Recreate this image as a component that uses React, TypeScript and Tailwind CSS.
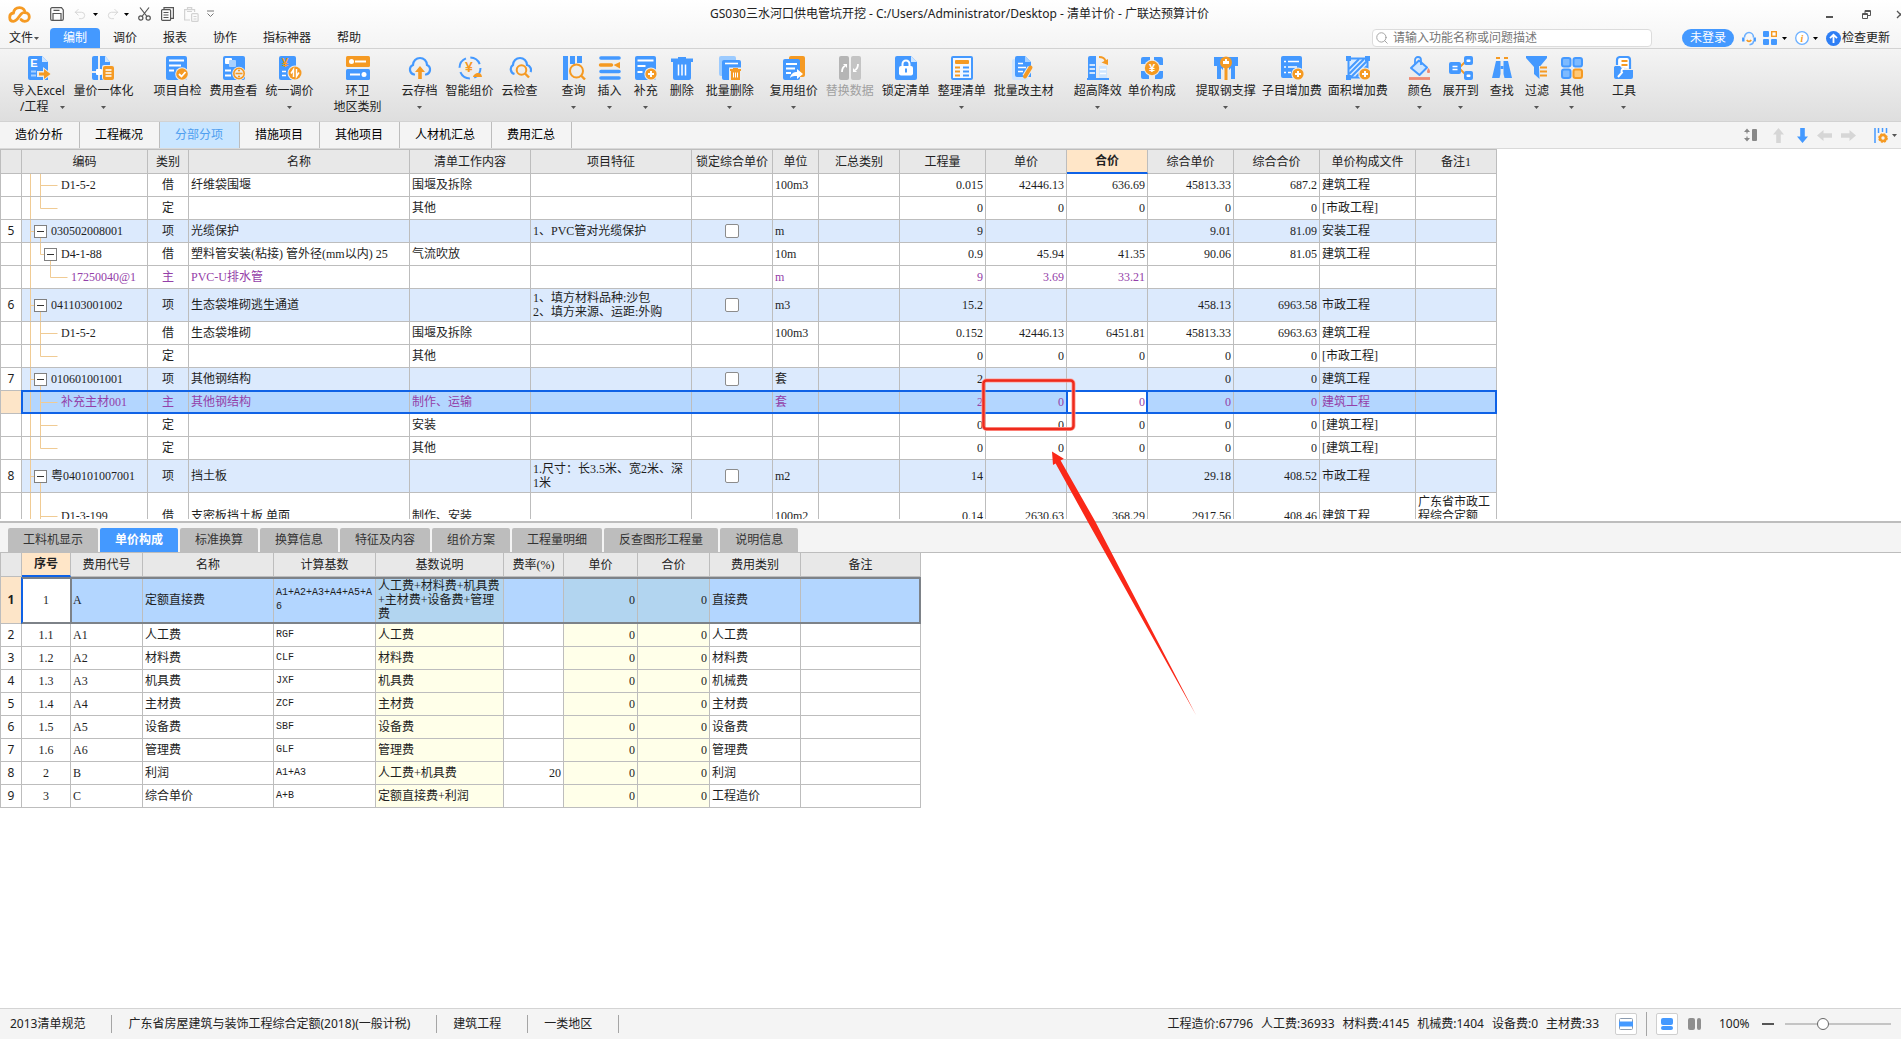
import type { ReactNode } from 'react';
import { Redo2, Search, Undo2 } from 'lucide-react';

const BLUE = '#4499ff';
const ORANGE = '#f59a23';
const TREE = '#f0cb94';

/* ---------- ribbon icons, 24x24 ---------- */

const Yen = ({ x, y, size = 12, fill = ORANGE }: { x: number; y: number; size?: number; fill?: string }) => (
  <text x={x} y={y} fontSize={size} fontWeight="700" fontFamily="Liberation Sans, sans-serif" textAnchor="middle" fill={fill}>
    ¥
  </text>
);

const PlusBadge = ({ cx = 17, cy = 18 }: { cx?: number; cy?: number }) => (
  <g>
    <circle cx={cx} cy={cy} r="6.6" fill="#ededed" />
    <circle cx={cx} cy={cy} r="5.6" fill={ORANGE} />
    <path d={`M${cx - 3} ${cy}h6M${cx} ${cy - 3}v6`} stroke="#fff" strokeWidth="2" />
  </g>
);

const icons: Record<string, ReactNode> = {
  importExcel: (
    <>
      <path d="M3 0h12l6 6v18H3a2 2 0 0 1-2-2V2a2 2 0 0 1 2-2z" fill={BLUE} />
      <path d="M15 0l6 6h-6z" fill="#cfe6ff" />
      <text x="7" y="11" fontSize="11" fontWeight="700" fontFamily="Liberation Sans, sans-serif" textAnchor="middle" fill="#fff">E</text>
      <path d="M4 15.500h5M4 19.500h5" stroke="#a8d1ff" strokeWidth="2" />
      <path d="M10 15h6v-4l9 7-9 7v-4h-6z" fill="#ededed" />
      <path d="M12 16.500h5v-3.500l6.500 5-6.500 5v-3.500h-5z" fill={ORANGE} />
    </>
  ),
  quantity: (
    <>
      <path d="M1 2a2 2 0 0 1 2-2h4v24H3a2 2 0 0 1-2-2zM9 0h5l5 6v18H9z" fill={BLUE} />
      <path d="M14 0l5 6h-5z" fill="#cfe6ff" />
      <path d="M1 16h12" stroke="#ededed" strokeWidth="2" />
      <rect x="5" y="13" width="6" height="6" rx="1" fill="#fff" />
      <rect x="11" y="9" width="13" height="15" rx="2" fill="#ededed" />
      <rect x="12" y="10" width="11" height="14" rx="2" fill={ORANGE} />
      <path d="M14.500 14h6M14.500 17h6M14.500 20h6" stroke="#fff" strokeWidth="1.500" />
    </>
  ),
  check: (
    <>
      <rect x="1" width="21" height="24" rx="2" fill={BLUE} />
      <path d="M4 4.500h15M4 9.500h12M4 14.500h5" stroke="#fff" strokeWidth="1.800" />
      <circle cx="17" cy="18" r="6.800" fill="#ededed" />
      <circle cx="17" cy="18" r="5.800" fill={ORANGE} />
      <path d="M14 18l2.500 2.500 4-4.500" stroke="#fff" strokeWidth="1.800" fill="none" />
    </>
  ),
  fee: (
    <>
      <rect x="1" width="22" height="24" rx="2" fill={BLUE} />
      <rect x="3" y="2" width="7" height="6" rx="1" fill="#fff" />
      <rect x="7" y="4" width="7" height="7" rx="1" fill="#a8d1ff" />
      <path d="M3 14.500h6M3 19.500h6" stroke="#fff" strokeWidth="1.800" />
      <circle cx="17" cy="17.500" r="6.800" fill="#ededed" />
      <circle cx="17" cy="17.500" r="5.200" fill="none" stroke={ORANGE} strokeWidth="1.600" />
      <path d="M13.500 17.500h7" stroke={ORANGE} strokeWidth="1.600" />
      <circle cx="17" cy="14.500" r="1.100" fill={ORANGE} />
      <circle cx="17" cy="20.500" r="1.100" fill={ORANGE} />
    </>
  ),
  adjust: (
    <>
      <rect x="1" width="17" height="24" rx="2" fill={BLUE} />
      <Yen x={7} y={11} />
      <path d="M4 15.500h4M4 19.500h4" stroke="#fff" strokeWidth="1.600" />
      <circle cx="17" cy="17" r="7.500" fill="#ededed" />
      <circle cx="17" cy="17" r="6.500" fill={ORANGE} />
      <path d="M13 17.500l2.500-4v7.500M21 16.500l-2.500 4V13" stroke="#fff" strokeWidth="1.500" fill="none" />
    </>
  ),
  region: (
    <>
      <rect y="0" width="24" height="11" rx="1.500" fill={ORANGE} />
      <rect y="13" width="24" height="11" rx="1.500" fill={BLUE} />
      <circle cx="5.500" cy="5.500" r="2.500" fill="#fff" />
      <path d="M9 5.500h11M4 18.500h10" stroke="#fff" strokeWidth="1.800" />
      <circle cx="18" cy="18.500" r="2.500" fill="#fff" />
    </>
  ),
  cloudUp: (
    <>
      <path d="M7 18.500H6A5 5 0 0 1 5 9a7 7 0 0 1 14 0 5 5 0 0 1-1 9.500h-1" fill="none" stroke={BLUE} strokeWidth="2.200" />
      <path d="M12 10l5 6h-3.200v7h-3.600v-7H7z" fill={ORANGE} />
    </>
  ),
  smart: (
    <>
      <circle cx="12" cy="12" r="10.500" fill="none" stroke={BLUE} strokeWidth="2" strokeDasharray="12 4.500" />
      <Yen x={11} y={16} size={14} />
      <path d="M15 21c0-3 8-7 9 0z" fill={ORANGE} />
    </>
  ),
  cloudSearch: (
    <>
      <path d="M6.500 18A5 5 0 0 1 5 9a7 7 0 0 1 14 0 5 5 0 0 1 3.500 7" fill="none" stroke={BLUE} strokeWidth="2.200" />
      <circle cx="13.500" cy="14" r="4.800" fill="none" stroke={ORANGE} strokeWidth="2" />
      <path d="M17 17.500l4 4" stroke={ORANGE} strokeWidth="2.400" />
    </>
  ),
  query: (
    <>
      <path d="M3.500 0v24M10.500 0v8M17.500 0v7" stroke={BLUE} strokeWidth="5" />
      <circle cx="14.500" cy="15" r="6.500" fill="none" stroke={ORANGE} strokeWidth="2" />
      <path d="M19 19.500l4 4" stroke={ORANGE} strokeWidth="2.400" />
    </>
  ),
  insert: (
    <>
      <path d="M3 2h18M3 15.500h18M3 22h18" stroke={BLUE} strokeWidth="3.600" strokeLinecap="round" />
      <path d="M2.500 9h11" stroke={ORANGE} strokeWidth="3.400" strokeLinecap="round" />
      <path d="M22 6v6.500L15.500 9z" fill={ORANGE} />
    </>
  ),
  supplement: (
    <>
      <rect x="1" width="21" height="24" rx="2" fill={BLUE} />
      <path d="M3.500 4.500h16M3.500 10h8M3.500 16h5" stroke="#fff" strokeWidth="1.800" />
      <PlusBadge />
    </>
  ),
  trash: (
    <>
      <path d="M1 2.500h7V1h8v1.500h7V6H1z" fill={BLUE} />
      <path d="M3 5h18v17a2 2 0 0 1-2 2H5a2 2 0 0 1-2-2z" fill={BLUE} />
      <path d="M8.500 8.500v11M12 8.500v11M15.500 8.500v11" stroke="#fff" strokeWidth="1.500" />
    </>
  ),
  batchTrash: (
    <>
      <rect x="1" width="17" height="20" rx="2" fill="#9ccbff" />
      <rect x="4" y="4" width="19" height="20" rx="2" fill={BLUE} />
      <path d="M7 7.500h13" stroke="#fff" strokeWidth="1.600" />
      <rect x="11" y="11.500" width="12.500" height="12.500" fill="#ededed" />
      <path d="M12 13h3v-1h5v1h3v2h-1v9h-9v-9h-1z" fill={ORANGE} />
      <path d="M15.500 16.500v5M17.500 16.500v5M19.500 16.500v5" stroke="#fff" strokeWidth="1" />
    </>
  ),
  reuse: (
    <>
      <rect x="7" width="16" height="21" rx="2" fill={ORANGE} />
      <rect x="1" y="3" width="17" height="21" rx="2" fill={BLUE} />
      <path d="M4 8h11M4 12.500h9M4 17h5" stroke="#fff" strokeWidth="1.800" />
      <path d="M8 22c1-5 4-6 7-6v-3l6 5-6 5v-3c-3 0-5 0-7 2z" fill="#fff" />
    </>
  ),
  replace: (
    <>
      <rect x="1" width="10" height="24" rx="2" fill="#b5b5b5" />
      <rect x="13" width="10" height="24" rx="2" fill="#c4c4c4" />
      <path d="M4 16c0-3 1-5 3-6M20 8c0 3-1 5-3 6" stroke="#fff" strokeWidth="1.800" fill="none" />
      <path d="M5 8h4v4zM19 16h-4v-4z" fill="#fff" />
    </>
  ),
  lock: (
    <>
      <path d="M3 0h14l6 6v16a2 2 0 0 1-2 2H3a2 2 0 0 1-2-2V2a2 2 0 0 1 2-2z" fill={BLUE} />
      <path d="M17 0l6 6h-6z" fill="#cfe6ff" />
      <rect x="5" y="10" width="14" height="9.500" rx="2" fill="#fff" />
      <path d="M8.500 10V8a3.500 3.500 0 0 1 7 0v2" stroke="#fff" strokeWidth="2" fill="none" />
      <path d="M12 12.500v4" stroke={BLUE} strokeWidth="2" />
    </>
  ),
  tidy: (
    <>
      <rect x="2" y="1" width="20" height="22" rx="1" fill="#f3f8ff" stroke={BLUE} strokeWidth="2" />
      <rect x="5" y="4" width="14" height="4" rx="1" fill={ORANGE} />
      <path d="M5 11.500h5M5 15.500h5M5 19.500h5" stroke={ORANGE} strokeWidth="1.800" />
      <path d="M13 11.500h6M13 15.500h6M13 19.500h6" stroke={BLUE} strokeWidth="1.800" />
    </>
  ),
  batchEdit: (
    <>
      <rect x="0" y="3" width="16" height="21" rx="2" fill="#cfe6ff" />
      <path d="M5 0h8l6 6v15H5a2 2 0 0 1-2-2V2a2 2 0 0 1 2-2z" fill={BLUE} />
      <path d="M13 0l6 6h-6z" fill="#a8d1ff" />
      <path d="M6 7.500h5M6 11.500h8M6 15.500h5" stroke="#fff" strokeWidth="1.500" />
      <path d="M13 20.500l5.500-9" stroke="#ededed" strokeWidth="6" />
      <path d="M13 20.500l5.500-9" stroke={ORANGE} strokeWidth="4" strokeLinecap="round" />
    </>
  ),
  highRise: (
    <>
      <path d="M2 2a2 2 0 0 1 2-2h6v24H2z" fill={BLUE} />
      <path d="M3.500 9h5.500M3.500 13h5.500M3.500 17h5.500" stroke="#fff" strokeWidth="1.500" />
      <rect x="13" y="10" width="8" height="12" fill="#cfe6ff" />
      <path d="M14 13.500h6M14 17.500h6" stroke="#fff" strokeWidth="1.300" />
      <path d="M1 23h22" stroke={BLUE} strokeWidth="2" />
      <path d="M13 1c4 0 6 2 6.500 4" stroke={ORANGE} strokeWidth="2" fill="none" />
      <path d="M15.500 6.500L22 3v6z" fill={ORANGE} />
    </>
  ),
  unitPrice: (
    <>
      <path d="M1 3a2 2 0 0 1 2-2h7v7H1zM14 1h7a2 2 0 0 1 2 2v6h-9zM1 15h8v8H3a2 2 0 0 1-2-2zM15 15h8v6a2 2 0 0 1-2 2h-6z" fill={BLUE} />
      <circle cx="12" cy="12" r="8.200" fill="#ededed" />
      <circle cx="12" cy="12" r="7.200" fill={ORANGE} />
      <Yen x={12} y={16} size={11} fill="#fff" />
    </>
  ),
  steel: (
    <>
      <path d="M0 1h24v9h-3v13h-4V12l-5 5-5-5v11H3V10H0z" fill={BLUE} />
      <path d="M12 8v16" stroke="#ededed" strokeWidth="6" />
      <path d="M12 8v16" stroke={ORANGE} strokeWidth="3" />
      <circle cx="12" cy="6.500" r="6" fill={ORANGE} />
      <path d="M9 5h2V3h2v2h2v3H9z" fill="#fff" />
    </>
  ),
  subItem: (
    <>
      <rect x="1" width="21" height="22" rx="2" fill={BLUE} />
      <path d="M4 5.500h2M8 5.500h11M4 11h2M8 11h9M4 16.500h2M8 16.500h3" stroke="#fff" strokeWidth="1.600" />
      <PlusBadge cx={18} />
    </>
  ),
  area: (
    <>
      <rect x="2.500" y="2.500" width="19" height="19" fill="#d9ebff" stroke={BLUE} strokeWidth="2" />
      <path d="M3 13L13 3M3 18L18 3M4 22L21 5M10 21l11-11" stroke={BLUE} strokeWidth="2" />
      <path d="M0 0h5v5H0zM19 0h5v5h-5zM0 19h5v5H0z" fill={BLUE} />
      <PlusBadge cx={19} />
    </>
  ),
  color: (
    <>
      <path d="M11 4.500l8 7-7.500 7.500-8.500-7z" fill="#cfe6ff" stroke={BLUE} strokeWidth="2" strokeLinejoin="round" />
      <path d="M7 9V4a3 3 0 0 1 6 0v5" stroke={BLUE} strokeWidth="1.800" fill="none" />
      <path d="M20.500 12c2 3 2 5 0 5s-2-2 0-5z" fill="#ee8a72" />
      <path d="M1 22.500h21" stroke="#ee8a72" strokeWidth="2.800" />
    </>
  ),
  expand: (
    <>
      <path d="M11 11l6-6M11 13l6 6" stroke={ORANGE} strokeWidth="1.800" />
      <rect x="0" y="6" width="12" height="12" rx="2" fill={BLUE} />
      <path d="M3.500 10.500h5M3.500 13.500h5" stroke="#fff" strokeWidth="1.400" />
      <rect x="15" y="0" width="9" height="9" rx="2" fill={BLUE} />
      <rect x="15" y="15" width="9" height="9" rx="2" fill={BLUE} />
      <rect x="17.500" y="3.500" width="4" height="2.500" rx="1" fill="#fff" />
      <rect x="17.500" y="18.500" width="4" height="2.500" rx="1" fill="#fff" />
    </>
  ),
  find: (
    <>
      <path d="M6 5h4.500v13L9.500 22H2zM13.500 5H18l4 17h-7.500l-1-4z" fill={BLUE} />
      <path d="M6 2h4M14 2h4" stroke={ORANGE} strokeWidth="2" />
      <path d="M10.500 10h3v3h-3z" fill={BLUE} />
    </>
  ),
  filter: (
    <>
      <path d="M1 0h21v2l-7.500 9v12L9 18v-7L1 2z" fill={BLUE} />
      <path d="M14 10h9v14h-8z" fill="#ededed" />
      <path d="M15 11.500h7M15 15.500h7M15 19.500h7" stroke={ORANGE} strokeWidth="2" />
    </>
  ),
  other: (
    <>
      <g fill="#7dbaff" stroke={BLUE} strokeWidth="2">
        <rect x="2" y="2" width="8.500" height="8.500" rx="2" />
        <rect x="13.500" y="2" width="8.500" height="8.500" rx="2" />
        <rect x="2" y="13.500" width="8.500" height="8.500" rx="2" />
      </g>
      <rect x="13.500" y="13.500" width="8.500" height="8.500" rx="2" fill="#ffc877" stroke={ORANGE} strokeWidth="2" />
    </>
  ),
  tools: (
    <>
      <path d="M5 9V4a3 3 0 0 1 3-3h7a3 3 0 0 1 3 3v9" fill="#fff" stroke={BLUE} strokeWidth="2.200" />
      <path d="M9.500 5h6M9.500 9h6" stroke={ORANGE} strokeWidth="1.800" />
      <path d="M3 10h5l3 4h10v7a2 2 0 0 1-2 2H4a2 2 0 0 1-2-2V11z" fill={BLUE} />
      <path d="M6 21l4-4.500a2.500 2.500 0 0 1 2-4" stroke="#fff" strokeWidth="2" fill="none" />
    </>
  ),
};

interface Tool {
  icon: string;
  label: string;
  second?: string;
  menu?: boolean;
  disabled?: boolean;
}

const toolGroups: { className: string; tools: Tool[] }[] = [
  {
    className: 'gap-2',
    tools: [
      { icon: 'importExcel', label: '导入Excel', second: '/工程', menu: true },
      { icon: 'quantity', label: '量价一体化', menu: true },
    ],
  },
  {
    className: 'ml-5 gap-2',
    tools: [
      { icon: 'check', label: '项目自检' },
      { icon: 'fee', label: '费用查看' },
      { icon: 'adjust', label: '统一调价', menu: true },
    ],
  },
  { className: 'ml-5', tools: [{ icon: 'region', label: '环卫', second: '地区类别' }] },
  {
    className: 'ml-5 gap-2',
    tools: [
      { icon: 'cloudUp', label: '云存档', menu: true },
      { icon: 'smart', label: '智能组价' },
      { icon: 'cloudSearch', label: '云检查' },
    ],
  },
  {
    className: 'ml-6 gap-3',
    tools: [
      { icon: 'query', label: '查询', menu: true },
      { icon: 'insert', label: '插入', menu: true },
      { icon: 'supplement', label: '补充', menu: true },
      { icon: 'trash', label: '删除' },
      { icon: 'batchTrash', label: '批量删除', menu: true },
    ],
  },
  {
    className: 'ml-4 gap-2',
    tools: [
      { icon: 'reuse', label: '复用组价', menu: true },
      { icon: 'replace', label: '替换数据', disabled: true },
      { icon: 'lock', label: '锁定清单' },
      { icon: 'tidy', label: '整理清单', menu: true },
      { icon: 'batchEdit', label: '批量改主材' },
    ],
  },
  {
    className: 'ml-5 gap-1.5',
    tools: [
      { icon: 'highRise', label: '超高降效', menu: true },
      { icon: 'unitPrice', label: '单价构成' },
    ],
  },
  {
    className: 'ml-5 gap-1.5',
    tools: [
      { icon: 'steel', label: '提取钢支撑', menu: true },
      { icon: 'subItem', label: '子目增加费' },
      { icon: 'area', label: '面积增加费', menu: true },
    ],
  },
  {
    className: 'ml-5 gap-[11px]',
    tools: [
      { icon: 'color', label: '颜色', menu: true },
      { icon: 'expand', label: '展开到', menu: true },
      { icon: 'find', label: '查找' },
      { icon: 'filter', label: '过滤', menu: true },
      { icon: 'other', label: '其他', menu: true },
    ],
  },
  { className: 'ml-7', tools: [{ icon: 'tools', label: '工具', menu: true }] },
];

const Caret = ({ className = 'text-[#555]' }: { className?: string }) => (
  <svg width="5" height="3" viewBox="0 0 5 3" className={`shrink-0 ${className}`} aria-hidden="true">
    <path d="M0 0h5L2.500 3z" fill="currentColor" />
  </svg>
);

/* ---------- title bar, menu, ribbon ---------- */

const TitleBar = () => (
  <header className="grid h-7 grid-cols-[1fr_auto_1fr] items-center">
    <div className="flex items-center pl-2 text-[#555]">
      <svg width="23" height="17" viewBox="0 0 23 17" aria-hidden="true">
        <path
          d="M5.500 7C6 3.300 8.800 1.700 11.500 1.700c3.300 0 5.300 2.200 5.500 4.900 2.500.2 4.300 2 4.300 4.400 0 2.800-2.300 4.300-4.500 4.300-1.800 0-2.900-.7-3.800-1.800M14.500 7C11.500 8 10 15.300 5.500 15.300c-2.500 0-3.800-1.800-3.800-4.100C1.700 8.800 3.500 7.200 5.500 7"
          fill="none"
          stroke={ORANGE}
          strokeWidth="2.800"
          strokeLinecap="round"
        />
      </svg>
      <button aria-label="保存" className="ml-[19px]">
        <svg width="14" height="14" viewBox="0 0 14 14" fill="none" stroke="currentColor" strokeWidth="1.200" aria-hidden="true">
          <path d="M2 .700h9.500L13.300 3v9a1.300 1.300 0 0 1-1.300 1.300H2A1.300 1.300 0 0 1 .700 12V2A1.300 1.300 0 0 1 2 .700zM3 13V6.500h8V13M3.500 3.300h6" />
        </svg>
      </button>
      <button aria-label="撤销" className="ml-[9px] text-[#d2d2d2]"><Undo2 size={14} strokeWidth={1.5} /></button>
      <button aria-label="撤销列表" className="ml-1.5"><Caret className="text-black" /></button>
      <button aria-label="重做" className="ml-2 text-[#d2d2d2]"><Redo2 size={14} strokeWidth={1.5} /></button>
      <button aria-label="重做列表" className="ml-1"><Caret className="text-black" /></button>
      <button aria-label="剪切" className="ml-[9px]">
        <svg width="13" height="14" viewBox="0 0 13 14" fill="none" stroke="currentColor" strokeWidth="1.200" aria-hidden="true">
          <path d="M2 .500l7 9M11 .500l-7 9" />
          <circle cx="2.800" cy="11" r="2.100" />
          <circle cx="10.200" cy="11" r="2.100" />
        </svg>
      </button>
      <button aria-label="复制" className="ml-2.5">
        <svg width="13" height="14" viewBox="0 0 13 14" fill="none" stroke="currentColor" strokeWidth="1.200" aria-hidden="true">
          <rect x=".600" y="2.600" width="9" height="10.800" rx="1" />
          <path d="M3 2.500V.600h9.400v10.800H10M2.500 5.500h5M2.500 8h5M2.500 10.500h5" />
        </svg>
      </button>
      <button aria-label="粘贴" className="ml-2.5 text-[#d2d2d2]">
        <svg width="15" height="15" viewBox="0 0 15 15" fill="none" stroke="currentColor" strokeWidth="1.200" aria-hidden="true">
          <path d="M6 13H.600V2.600h10V5M3.500 2.500V.600h4.200v1.900M3 4.500h5" />
          <rect x="7.600" y="6.600" width="6.500" height="7.800" rx="1" />
          <path d="M9.500 9.500h3M9.500 12h3" />
        </svg>
      </button>
      <button aria-label="自定义" className="ml-2">
        <svg width="7" height="8" viewBox="0 0 7 8" aria-hidden="true">
          <path d="M0 1h7M.500 3.500l3 3 3-3" stroke="#777" fill="none" />
        </svg>
      </button>
    </div>
    <h1 className="pl-[18px] whitespace-nowrap">
      GS030三水河口供电管坑开挖 - C:/Users/Administrator/Desktop - 清单计价 - 广联达预算计价
    </h1>
    <div className="flex items-center justify-end gap-[29px] overflow-hidden text-[#555]">
      <button aria-label="最小化">
        <svg width="7" height="9" viewBox="0 0 7 9" aria-hidden="true"><path d="M0 7h7" stroke="currentColor" strokeWidth="2" /></svg>
      </button>
      <button aria-label="还原">
        <svg width="9" height="9" viewBox="0 0 9 9" fill="none" stroke="currentColor" aria-hidden="true">
          <path d="M.500 3.500h5v5h-5zM3 3V.500h5.500v5H6M.500 4.500h5M3 1.500h5" />
        </svg>
      </button>
      <button aria-label="关闭" className="-mr-1 -ml-1">
        <svg width="9" height="9" viewBox="0 0 9 9" aria-hidden="true"><path d="M1 1l7 7M8 1l-7 7" stroke="currentColor" strokeWidth="1.300" /></svg>
      </button>
    </div>
  </header>
);

const menus = ['调价', '报表', '协作', '指标神器', '帮助'];

const MenuBar = () => (
  <div className="flex h-5 items-center">
    <nav className="flex h-full items-center">
      <button className="flex items-center gap-px pr-[11px] pl-[9px]">
        文件
        <Caret />
      </button>
      <button className="h-full rounded-t-sm bg-[#4499ff] px-[13px] text-white">编制</button>
      {menus.map((m) => (
        <button key={m} className="px-[13px]">{m}</button>
      ))}
    </nav>
    <div className="ml-auto flex items-center">
      <label className="flex h-[18px] w-[280px] items-center rounded-sm border border-[#dcdcdc] bg-white pl-0.5">
        <Search size={14} strokeWidth={1.5} className="text-[#999]" />
        <input
          type="text"
          aria-label="搜索"
          placeholder="请输入功能名称或问题描述"
          className="ml-1 min-w-0 flex-1 bg-transparent outline-none placeholder:text-[#777]"
        />
      </label>
      <button className="ml-[30px] h-[18px] w-[52px] rounded-full bg-[#4499ff] text-white">未登录</button>
      <button aria-label="客服" className="ml-2">
        <svg width="14" height="15" viewBox="0 0 14 15" fill="none" strokeWidth="1.600" aria-hidden="true">
          <path d="M2.500 6.500a4.500 5 0 0 1 9 0M11.500 10c0 2-1.500 3.500-4 3.700" stroke="#6cb0ff" />
          <path d="M1.300 6.500v4M12.700 6.500v4" stroke={BLUE} strokeWidth="2.400" />
          <path d="M4.800 9c1 1.800 3.400 1.800 4.400 0" stroke={ORANGE} />
        </svg>
      </button>
      <button aria-label="应用" className="ml-[7px] flex items-center gap-[5px]">
        <svg width="14" height="14" viewBox="0 0 14 14" aria-hidden="true">
          <rect x="0" y="0" width="6" height="6" rx="1" fill={BLUE} />
          <rect x="0" y="8" width="6" height="6" rx="1" fill={BLUE} />
          <rect x="8" y="8" width="6" height="6" rx="1" fill={BLUE} />
          <rect x="8.700" y=".700" width="4.600" height="4.600" fill="#fff" stroke={ORANGE} strokeWidth="1.400" />
        </svg>
        <Caret className="text-black" />
      </button>
      <button aria-label="关于" className="ml-2 flex items-center gap-1">
        <svg width="14" height="14" viewBox="0 0 14 14" aria-hidden="true">
          <circle cx="7" cy="7" r="6.300" fill="#fff" stroke="#6cb0ff" strokeWidth="1.300" />
          <text x="7" y="10.500" fontSize="10" fontWeight="700" fontStyle="italic" fontFamily="Liberation Serif, serif" textAnchor="middle" fill={ORANGE}>i</text>
        </svg>
        <Caret className="text-black" />
      </button>
      <button className="mr-[11px] ml-2 flex items-center gap-px">
        <svg width="15" height="15" viewBox="0 0 15 15" aria-hidden="true">
          <circle cx="7.500" cy="7.500" r="7.500" fill="#2f7ff5" />
          <path d="M7.500 12V4M4 7.200l3.500-3.500L11 7.200" stroke="#fff" strokeWidth="1.800" fill="none" />
        </svg>
        检查更新
      </button>
    </div>
  </div>
);

const Ribbon = () => (
  <div className="flex h-[74px] items-start overflow-hidden border-y border-[#d2d2d2] bg-linear-to-b from-[#f4f4f4] to-[#dedede] pt-[7px] pl-3">
    {toolGroups.map((group) => (
      <div key={group.tools[0].label} className={`flex shrink-0 items-start ${group.className}`}>
        {group.tools.map((t) => (
          <button
            key={t.label}
            disabled={t.disabled}
            className={`flex flex-col items-center leading-4 whitespace-nowrap ${t.disabled ? 'text-[#a0a0a0]' : ''}`}
          >
            <svg width="24" height="24" viewBox="0 0 24 24" className="mb-[3px]" aria-hidden="true">{icons[t.icon]}</svg>
            <span>{t.label}</span>
            <span className="flex h-4 items-center gap-3">
              {t.second && <span className={t.menu ? 'ml-2' : ''}>{t.second}</span>}
              {t.menu && <Caret />}
            </span>
          </button>
        ))}
      </div>
    ))}
  </div>
);

const pageTabs = ['造价分析', '工程概况', '分部分项', '措施项目', '其他项目', '人材机汇总', '费用汇总'];

const Arrow = ({ rotate, color }: { rotate: string; color: string }) => (
  <svg width="15" height="15" viewBox="0 0 15 15" className={rotate} aria-hidden="true">
    <path d="M7.500 0l5.500 6.500h-3.200V15H5.200V6.500H2z" fill={color} />
  </svg>
);

const PageTabs = () => (
  <div className="flex h-[27px] items-stretch border-b border-[#d9d9d9] bg-[#f4f4f4]">
    {pageTabs.map((t) => (
      <button
        key={t}
        className={`border-r border-[#bdbdbd] pr-4 pl-[15px] ${
          t === '分部分项' ? 'bg-[#cae6ff] text-[#4f9ff0]' : 'text-black'
        }`}
      >
        {t}
      </button>
    ))}
    <div className="ml-auto flex items-center pr-1">
      <button aria-label="行高">
        <svg width="13" height="14" viewBox="0 0 13 14" aria-hidden="true">
          <path d="M3 2v3.500M3 8.500V12" stroke="#888" strokeWidth="1.200" />
          <path d="M0 4l3-3.500L6 4zM0 10l3 3.500L6 10z" fill="#888" />
          <rect x="8" y="1" width="5" height="12" rx="1" fill="#888" />
        </svg>
      </button>
      <button aria-label="上移" className="ml-3.5"><Arrow rotate="rotate-0" color="#d6d6d6" /></button>
      <button aria-label="下移" className="ml-[9px]"><Arrow rotate="rotate-180" color={BLUE} /></button>
      <button aria-label="左移" className="ml-[7px]"><Arrow rotate="-rotate-90" color="#d6d6d6" /></button>
      <button aria-label="右移" className="ml-[9px]"><Arrow rotate="rotate-90" color="#d6d6d6" /></button>
      <button aria-label="列设置" className="ml-[18px] flex items-center gap-1">
        <svg width="14" height="15" viewBox="0 0 14 15" aria-hidden="true">
          <path d="M1 0v15M4.500 0v5M8.500 0v4M12.500 0v5" stroke={BLUE} strokeWidth="1.500" />
          <circle cx="9" cy="10" r="3" fill="none" stroke={ORANGE} strokeWidth="2.600" />
          <circle cx="9" cy="10" r="4.200" fill="none" stroke={ORANGE} strokeWidth="1.200" strokeDasharray="2 1.300" />
        </svg>
        <Caret />
      </button>
    </div>
  </div>
);

/* ---------- bill of quantities ---------- */

interface BillRow {
  no?: string;
  code?: string;
  depth: 1 | 2 | 3;
  box?: boolean;
  last?: boolean;
  kind: string;
  name?: string;
  work?: string;
  feature?: string;
  unit?: string;
  nums: string[]; // 工程量 单价 合价 综合单价 综合合价
  file?: string;
  note?: string;
  height?: number;
  selected?: boolean;
}

const billColumns: [string, string][] = [
  ['编码', 'w-[126px]'],
  ['类别', 'w-[41px]'],
  ['名称', 'w-[221px]'],
  ['清单工作内容', 'w-[121px]'],
  ['项目特征', 'w-[161px]'],
  ['锁定综合单价', 'w-[81px]'],
  ['单位', 'w-[46px]'],
  ['汇总类别', 'w-[81px]'],
  ['工程量', 'w-[86px]'],
  ['单价', 'w-[81px]'],
  ['合价', 'w-[81px]'],
  ['综合单价', 'w-[86px]'],
  ['综合合价', 'w-[86px]'],
  ['单价构成文件', 'w-[96px]'],
  ['备注1', 'w-[81px]'],
];

const billRows: BillRow[] = [
  { depth: 2, code: 'D1-5-2', kind: '借', name: '纤维袋围堰', work: '围堰及拆除', unit: '100m3', nums: ['0.015', '42446.13', '636.69', '45813.33', '687.2'], file: '建筑工程' },
  { depth: 2, last: true, kind: '定', work: '其他', nums: ['0', '0', '0', '0', '0'], file: '[市政工程]' },
  { no: '5', depth: 1, box: true, code: '030502008001', kind: '项', name: '光缆保护', feature: '1、PVC管对光缆保护', unit: 'm', nums: ['9', '', '', '9.01', '81.09'], file: '安装工程' },
  { depth: 2, box: true, last: true, code: 'D4-1-88', kind: '借', name: '塑料管安装(粘接) 管外径(mm以内) 25', work: '气流吹放', unit: '10m', nums: ['0.9', '45.94', '41.35', '90.06', '81.05'], file: '建筑工程' },
  { depth: 3, last: true, code: '17250040@1', kind: '主', name: 'PVC-U排水管', unit: 'm', nums: ['9', '3.69', '33.21', '', ''] },
  { no: '6', depth: 1, box: true, code: '041103001002', kind: '项', name: '生态袋堆砌逃生通道', feature: '1、填方材料品种:沙包\n2、填方来源、运距:外购', unit: 'm3', nums: ['15.2', '', '', '458.13', '6963.58'], file: '市政工程', height: 33 },
  { depth: 2, code: 'D1-5-2', kind: '借', name: '生态袋堆砌', work: '围堰及拆除', unit: '100m3', nums: ['0.152', '42446.13', '6451.81', '45813.33', '6963.63'], file: '建筑工程' },
  { depth: 2, last: true, kind: '定', work: '其他', nums: ['0', '0', '0', '0', '0'], file: '[市政工程]' },
  { no: '7', depth: 1, box: true, code: '010601001001', kind: '项', name: '其他钢结构', unit: '套', nums: ['2', '', '', '0', '0'], file: '建筑工程' },
  { depth: 2, selected: true, code: '补充主材001', kind: '主', name: '其他钢结构', work: '制作、运输', unit: '套', nums: ['2', '0', '0', '0', '0'], file: '建筑工程' },
  { depth: 2, kind: '定', work: '安装', nums: ['0', '0', '0', '0', '0'], file: '[建筑工程]' },
  { depth: 2, last: true, kind: '定', work: '其他', nums: ['0', '0', '0', '0', '0'], file: '[建筑工程]' },
  { no: '8', depth: 1, box: true, code: '粤040101007001', kind: '项', name: '挡土板', feature: '1.尺寸：长3.5米、宽2米、深\n1米', unit: 'm2', nums: ['14', '', '', '29.18', '408.52'], file: '市政工程', height: 33 },
  { depth: 2, code: 'D1-3-199', kind: '借', name: '支密板挡土板 单面', work: '制作、安装', unit: '100m2', nums: ['0.14', '2630.63', '368.29', '2917.56', '408.46'], file: '建筑工程', note: '广东省市政工\n程综合定额\n\u00a0', height: 47 },
];

const TreeCell = ({ row }: { row: BillRow }) => {
  const h = (row.height ?? 23) - 1;
  const mid = Math.floor(h / 2) + 0.5;
  // each level's guide sits 10px right of its parent's
  const x = row.depth * 10 - 1.5;
  const end = row.box ? x + 4 : x + 17;
  const guides = [`M8.5 0V${h}`, `M${x} ${mid}H${end}`];
  if (row.depth > 1) guides.push(`M${x} 0V${row.last ? mid : h}`);
  if (row.box) guides.push(`M${x + 10} ${mid}V${h}`);

  return (
    <div className="flex items-center">
      <svg width={end - 0.5} height={h} className="shrink-0 overflow-visible" aria-hidden="true">
        <path d={guides.join('')} stroke={TREE} fill="none" />
      </svg>
      {row.box && (
        <button aria-label="折叠" className="relative flex size-[13px] shrink-0 items-center justify-center border border-[#808080] bg-white">
          <span className="h-px w-[7px] bg-[#333]" />
        </button>
      )}
      <span className="pl-1 whitespace-nowrap">{row.code}</span>
    </div>
  );
};

const cell = 'border-r border-b border-[#bdbdbd] p-0';
const grid = "table-fixed border-separate border-spacing-0 border-l border-[#bdbdbd] font-['Liberation_Serif','Noto_Sans_CJK_SC',serif] text-xs leading-[14px]";

const BillTable = () => (
  <table className={`w-[1497px] border-t ${grid}`}>
    <colgroup>
      <col className="w-[21px]" />
      {billColumns.map(([label, w]) => (
        <col key={label} className={w} />
      ))}
    </colgroup>
    <thead>
      <tr className="h-6 bg-[#e8e8e8]">
        <th className={cell} />
        {billColumns.map(([label]) => (
          <th
            key={label}
            className={
              label === '合价'
                ? 'border-r border-b-2 border-r-[#bdbdbd] border-b-[#0f62e6] bg-[#ffe6c8] p-0 font-bold'
                : `${cell} font-normal whitespace-nowrap`
            }
          >
            {label}
          </th>
        ))}
      </tr>
    </thead>
    <tbody>
      {billRows.map((row, i) => {
        const item = row.kind === '项';
        const bg = row.selected ? 'bg-[#b3d6ff]' : item ? 'bg-[#dceafd]' : 'bg-white';
        const height = row.height === 47 ? 'h-[47px]' : row.height === 33 ? 'h-[33px]' : 'h-[23px]';
        return (
          <tr key={i} className={`relative ${height} ${bg} ${row.kind === '主' ? 'text-[#9440a8]' : 'text-[#1e1e1e]'}`}>
            <td className={`${cell} text-center font-['Noto_Sans',sans-serif] ${row.selected ? 'bg-[#fde5c8]' : 'bg-white'}`}>{row.no}</td>
            <td className={cell}><TreeCell row={row} /></td>
            <td className={`${cell} text-center`}>{row.kind}</td>
            <td className={`${cell} px-0.5 whitespace-nowrap`}>{row.name}</td>
            <td className={`${cell} px-0.5`}>{row.work}</td>
            <td className={`${cell} px-0.5 whitespace-pre`}>{row.feature}</td>
            <td className={cell}>
              {item && (
                <input
                  type="checkbox"
                  aria-label="锁定综合单价"
                  className="mx-auto block size-3.5 appearance-none rounded-xs border border-[#8c8c8c] bg-white"
                />
              )}
            </td>
            <td className={`${cell} px-0.5`}>{row.unit}</td>
            <td className={cell} />
            {row.nums.map((n, j) => (
              <td key={j} className={`${cell} px-0.5 text-right ${row.selected && j === 2 ? 'bg-white' : ''}`}>{n}</td>
            ))}
            <td className={`${cell} px-0.5`}>{row.file}</td>
            <td className={`${cell} px-0.5 whitespace-pre`}>
              {row.note}
              {row.selected && (
                <>
                  <span className="pointer-events-none absolute -top-px right-0 bottom-0 left-5 border-2 border-[#0f62e6]" />
                  <span className="pointer-events-none absolute top-0 right-[349px] bottom-0 w-[82px] border-x-2 border-[#0f62e6]" />
                </>
              )}
            </td>
          </tr>
        );
      })}
    </tbody>
  </table>
);

/* ---------- unit price breakdown ---------- */

const detailTabs = ['工料机显示', '单价构成', '标准换算', '换算信息', '特征及内容', '组价方案', '工程量明细', '反查图形工程量', '说明信息'];

const DetailTabs = () => (
  <div className="flex items-end gap-0.5 border-b border-[#bdbdbd] bg-[#f4f4f4] pt-[5px] pl-2">
    {detailTabs.map((t) => (
      <button
        key={t}
        className={`h-6 rounded-t-xs px-[15px] whitespace-nowrap ${
          t === '单价构成' ? 'bg-[#4499ff] font-bold text-white' : 'bg-[#bdbdbd] text-[#333]'
        }`}
      >
        {t}
      </button>
    ))}
  </div>
);

const priceColumns: [string, string][] = [
  ['序号', 'w-[49px]'],
  ['费用代号', 'w-[72px]'],
  ['名称', 'w-[131px]'],
  ['计算基数', 'w-[102px]'],
  ['基数说明', 'w-[128px]'],
  ['费率(%)', 'w-[60px]'],
  ['单价', 'w-[74px]'],
  ['合价', 'w-[72px]'],
  ['费用类别', 'w-[91px]'],
  ['备注', 'w-[120px]'],
];

// 序号 费用代号 名称 计算基数 基数说明 费率 费用类别
const priceRows = [
  ['1', 'A', '定额直接费', 'A1+A2+A3+A4+A5+A\n6', '人工费+材料费+机具费\n+主材费+设备费+管理\n费', '', '直接费'],
  ['1.1', 'A1', '人工费', 'RGF', '人工费', '', '人工费'],
  ['1.2', 'A2', '材料费', 'CLF', '材料费', '', '材料费'],
  ['1.3', 'A3', '机具费', 'JXF', '机具费', '', '机械费'],
  ['1.4', 'A4', '主材费', 'ZCF', '主材费', '', '主材费'],
  ['1.5', 'A5', '设备费', 'SBF', '设备费', '', '设备费'],
  ['1.6', 'A6', '管理费', 'GLF', '管理费', '', '管理费'],
  ['2', 'B', '利润', 'A1+A3', '人工费+机具费', '20', '利润'],
  ['3', 'C', '综合单价', 'A+B', '定额直接费+利润', '', '工程造价'],
];

const PriceTable = () => (
  <table className={`w-[921px] ${grid}`}>
    <colgroup>
      <col className="w-[21px]" />
      {priceColumns.map(([label, w]) => (
        <col key={label} className={w} />
      ))}
    </colgroup>
    <thead>
      <tr className="h-6 bg-[#e8e8e8]">
        <th className={cell} />
        {priceColumns.map(([label]) => (
          <th
            key={label}
            className={
              label === '序号'
                ? 'border-r border-b-2 border-r-[#bdbdbd] border-b-[#0f62e6] bg-[#ffe6c8] p-0 font-bold'
                : `${cell} font-normal whitespace-nowrap`
            }
          >
            {label}
          </th>
        ))}
      </tr>
    </thead>
    <tbody>
      {priceRows.map(([no, code, name, base, desc, rate, type], i) => {
        const selected = i === 0;
        const computed = selected ? 'bg-[#b2d5f0]' : 'bg-[#ffffe9]';
        return (
          <tr key={no} className={`relative text-[#1e1e1e] ${selected ? 'h-[47px] bg-[#b3d6ff]' : 'h-[23px] bg-white'}`}>
            <td
              className={`${cell} text-center font-['Noto_Sans',sans-serif] ${selected ? 'bg-[#fde5c8] font-bold' : ''}`}
            >
              {i + 1}
            </td>
            <td className={`${cell} text-center ${selected ? 'bg-white' : ''}`}>{no}</td>
            <td className={`${cell} px-0.5`}>{code}</td>
            <td className={`${cell} px-0.5`}>{name}</td>
            <td className={`${cell} px-0.5 font-['Liberation_Mono',monospace] text-[10px] leading-[14px] whitespace-pre`}>{base}</td>
            <td className={`${cell} px-0.5 whitespace-pre ${computed}`}>{desc}</td>
            <td className={`${cell} px-0.5 text-right`}>{rate}</td>
            <td className={`${cell} px-0.5 text-right ${computed}`}>0</td>
            <td className={`${cell} px-0.5 text-right ${computed}`}>0</td>
            <td className={`${cell} px-0.5`}>{type}</td>
            <td className={cell}>
              {selected && (
                <>
                  <span className="pointer-events-none absolute inset-y-0 right-0 left-5 border-2 border-[#7d8288] border-l-[#0f62e6]" />
                  <span className="pointer-events-none absolute inset-y-0 left-[69px] w-0.5 bg-[#7d8288]" />
                </>
              )}
            </td>
          </tr>
        );
      })}
    </tbody>
  </table>
);

/* ---------- status bar ---------- */

const totals = ['工程造价:67796', '人工费:36933', '材料费:4145', '机械费:1404', '设备费:0', '主材费:33'];

const StatusBar = () => (
  <footer className="flex h-[31px] shrink-0 items-center border-t border-[#d4d4d4] bg-[#f4f4f4] whitespace-nowrap">
    {['2013清单规范', '广东省房屋建筑与装饰工程综合定额(2018)(一般计税)', '建筑工程', '一类地区'].map((s) => (
      <span key={s} className="mr-1.5 flex h-[18px] items-center border-r border-[#a5a5a5] pr-[26px] pl-2.5">{s}</span>
    ))}
    <div className="ml-auto flex items-center">
      <div className="flex gap-2">
        {totals.map((t) => (
          <span key={t}>{t}</span>
        ))}
      </div>
      <button aria-label="单窗口" className="ml-4 flex h-[22px] w-[22px] items-center justify-center rounded-xs border border-[#cfcfcf] bg-white">
        <svg width="14" height="14" viewBox="0 0 14 14" aria-hidden="true">
          <rect x=".500" y="1.500" width="13" height="11" rx="1" fill="#fff" stroke="#8a9bb0" />
          <path d="M0 4.500h14v5H0z" fill={BLUE} />
        </svg>
      </button>
      <span className="ml-[9px] h-6 w-px bg-[#a5a5a5]" />
      <button aria-label="上下布局" className="ml-[9px] flex h-[22px] w-[22px] items-center justify-center rounded-xs border border-[#cfcfcf] bg-white">
        <svg width="14" height="14" viewBox="0 0 14 14" aria-hidden="true">
          <rect x="1" y="1" width="12" height="7" rx="2" fill={BLUE} />
          <rect x="1" y="9" width="12" height="4" rx="2" fill={BLUE} />
        </svg>
      </button>
      <button aria-label="左右布局" className="ml-2.5">
        <svg width="13" height="12" viewBox="0 0 13 12" aria-hidden="true">
          <rect width="7" height="12" rx="2" fill="#8f8f8f" />
          <rect x="9" width="4" height="12" rx="2" fill="#8f8f8f" />
        </svg>
      </button>
      <span className="ml-[18px] w-8">100%</span>
      <button aria-label="缩小" className="ml-[11px] flex h-4 items-center"><span className="h-0.5 w-3 bg-[#555]" /></button>
      <input
        type="range"
        aria-label="缩放"
        defaultValue={34}
        className="mr-2.5 ml-[11px] h-3.5 w-[106px] appearance-none bg-[linear-gradient(#c4c4c4,#c4c4c4)] bg-[length:100%_2px] bg-center bg-no-repeat [&::-webkit-slider-thumb]:size-3 [&::-webkit-slider-thumb]:appearance-none [&::-webkit-slider-thumb]:rounded-full [&::-webkit-slider-thumb]:border [&::-webkit-slider-thumb]:border-[#666] [&::-webkit-slider-thumb]:bg-white"
      />
    </div>
  </footer>
);

/* red frame around 单价 and the arrow pointing at it */
const Markup = () => (
  <svg width="220" height="340" viewBox="0 0 220 340" className="pointer-events-none absolute top-[377px] left-[980px]" aria-hidden="true">
    <rect x="3.500" y="3.500" width="90" height="48.500" rx="3" fill="none" stroke="#ff9d95" strokeWidth="4" />
    <rect x="3.500" y="3.500" width="90" height="48.500" rx="3" fill="none" stroke="#ee2a1c" strokeWidth="2.400" />
    <path d="M72 74.500L73 88l2.600-1.600L109 147 216 338 115 144 80.600 83.600l3.200-1.800z" fill="#fa2818" />
  </svg>
);

export default function App() {
  return (
    <div className="relative flex h-screen flex-col overflow-hidden bg-white font-['Noto_Sans','Noto_Sans_CJK_SC',sans-serif] text-xs leading-4 text-[#222]">
      <div className="bg-linear-to-b from-white to-[#f4f4f4]">
        <TitleBar />
        <MenuBar />
      </div>
      <Ribbon />
      <PageTabs />
      <main className="flex min-h-0 flex-1 flex-col">
        <section className="min-h-0 flex-[372] overflow-hidden pb-0.5">
          <div className="h-full overflow-hidden">
            <BillTable />
          </div>
        </section>
        <section className="flex min-h-0 flex-[487] flex-col overflow-hidden border-t-2 border-[#bdbdbd]">
          <DetailTabs />
          <PriceTable />
        </section>
      </main>
      <StatusBar />
      <Markup />
    </div>
  );
}
